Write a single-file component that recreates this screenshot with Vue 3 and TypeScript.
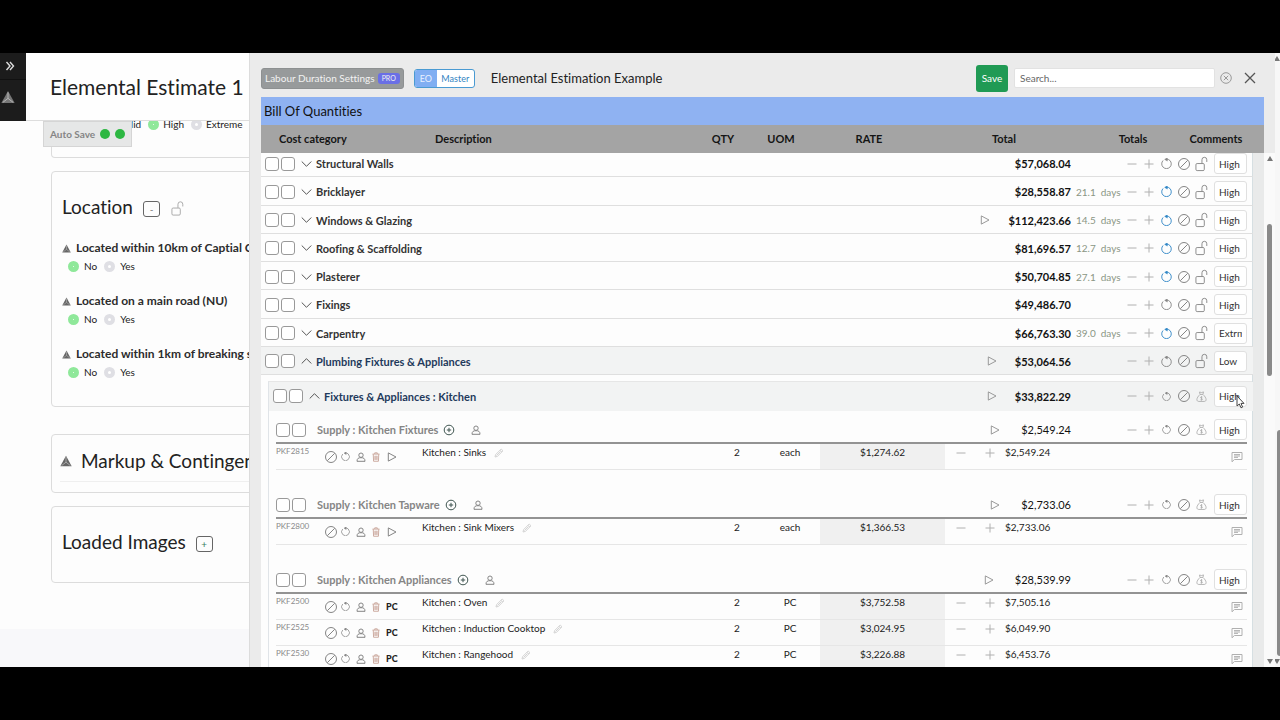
<script setup lang="ts">
import { reactive, ref } from 'vue'

interface Category {
  name: string
  total: string
  days?: string
  level: string
  play?: boolean
  open?: boolean
}
interface Item {
  code: string
  name: string
  qty: number
  uom: string
  rate: string
  total: string
}
interface Section {
  name: string
  total: string
  level: string
  items: Item[]
}

const levels = ['Low', 'Mid', 'High', 'Extrm']
const search = ref('')

const questions = reactive([
  { text: 'Located within 10km of Captial City', answer: 'No' },
  { text: 'Located on a main road (NU)', answer: 'No' },
  { text: 'Located within 1km of breaking surf', answer: 'No' },
])
const finish = ref('High')

const categories = reactive<Category[]>([
  { name: 'Structural Walls', total: '$57,068.04', level: 'High' },
  { name: 'Bricklayer', total: '$28,558.87', days: '21.1', level: 'High' },
  { name: 'Windows & Glazing', total: '$112,423.66', days: '14.5', level: 'High', play: true },
  { name: 'Roofing & Scaffolding', total: '$81,696.57', days: '12.7', level: 'High' },
  { name: 'Plasterer', total: '$50,704.85', days: '27.1', level: 'High' },
  { name: 'Fixings', total: '$49,486.70', level: 'High' },
  { name: 'Carpentry', total: '$66,763.30', days: '39.0', level: 'Extrm' },
  { name: 'Plumbing Fixtures & Appliances', total: '$53,064.56', level: 'Low', play: true, open: true },
])

const group = reactive({ name: 'Fixtures & Appliances : Kitchen', total: '$33,822.29', level: 'High' })

const sections = reactive<Section[]>([
  {
    name: 'Supply : Kitchen Fixtures', total: '$2,549.24', level: 'High',
    items: [{ code: 'PKF2815', name: 'Kitchen : Sinks', qty: 2, uom: 'each', rate: '$1,274.62', total: '$2,549.24' }],
  },
  {
    name: 'Supply : Kitchen Tapware', total: '$2,733.06', level: 'High',
    items: [{ code: 'PKF2800', name: 'Kitchen : Sink Mixers', qty: 2, uom: 'each', rate: '$1,366.53', total: '$2,733.06' }],
  },
  {
    name: 'Supply : Kitchen Appliances', total: '$28,539.99', level: 'High',
    items: [
      { code: 'PKF2500', name: 'Kitchen : Oven', qty: 2, uom: 'PC', rate: '$3,752.58', total: '$7,505.16' },
      { code: 'PKF2525', name: 'Kitchen : Induction Cooktop', qty: 2, uom: 'PC', rate: '$3,024.95', total: '$6,049.90' },
      { code: 'PKF2530', name: 'Kitchen : Rangehood', qty: 2, uom: 'PC', rate: '$3,226.88', total: '$6,453.76' },
    ],
  },
])
</script>

<template>
  <div class="stage">
    <svg class="sprite" aria-hidden="true">
      <symbol id="i-minus" viewBox="0 0 10 10"><path d="M.5 5h9" /></symbol>
      <symbol id="i-plus" viewBox="0 0 10 10"><path d="M.5 5h9M5 .5v9" /></symbol>
      <symbol id="i-rotate" viewBox="0 0 12 12">
        <path d="M2.300 2.700A5.200 5.200 0 1 0 9.700 2.700 5.200 5.200 0 0 0 6 1.200" /><path d="M6.900-.4 4 1.500l2.900 1.900z" fill="currentColor" stroke-width=".5" />
      </symbol>
      <symbol id="i-ban" viewBox="0 0 12 12"><circle cx="6" cy="6" r="5.500" /><path d="M2.300 9.700l7.400-7.400" /></symbol>
      <symbol id="i-lock" viewBox="0 0 14 16">
        <rect x="1" y="7.5" width="9" height="7.6" rx="1.3" /><path d="M7.5 7.3V3.4a2.6 2.6 0 0 1 5.2 0v2.4" />
      </symbol>
      <symbol id="i-bag" viewBox="0 0 12 12">
        <path d="M4.4 3.8h3.2M4.4 3.6 3.8 1.1 6 1.7 8.2 1l-.6 2.6M4.4 3.8C2.4 5.6 1 7.6 1 9.4c0 1.3.8 2 2 2h6c1.200 0 2-.7 2-2 0-1.800-1.400-3.800-3.400-5.600" />
        <path d="M7 6.600C6 6 5 6.400 5 7.200c0 1 2 .8 2 1.800 0 .9-1.200 1.200-2.100.6M6 5.800v4.400" />
      </symbol>
      <symbol id="i-play" viewBox="0 0 10 10"><path d="M1.300.9 9 5 1.300 9.100z" stroke-linejoin="round" /></symbol>
      <symbol id="i-down" viewBox="0 0 12 8"><path d="M.8 1.300 6 6.500l5.200-5.200" /></symbol>
      <symbol id="i-up" viewBox="0 0 12 8"><path d="M.8 6.700 6 1.500l5.200 5.200" /></symbol>
      <symbol id="i-add" viewBox="0 0 12 12"><circle cx="6" cy="6" r="4.800" /><path d="M3.800 6h4.400M6 3.800v4.400" /></symbol>
      <symbol id="i-person" viewBox="0 0 10 10"><circle cx="5" cy="3.200" r="2.200" /><path d="M1 9.300c0-3 1.500-3.600 4-3.600s4 .6 4 3.600z" /></symbol>
      <symbol id="i-trash" viewBox="0 0 10 12">
        <path d="M.8 2.500h8.400M3.500 2.300V1h3v1.300M1.700 2.700l.4 8.400h5.800l.4-8.400M3.700 4.500v5M5 4.500v5M6.300 4.500v5" />
      </symbol>
      <symbol id="i-pencil" viewBox="0 0 10 10"><path d="M1 9l.6-2.400L7.200 1l1.800 1.800-5.600 5.600zM6 2.200 7.800 4M2.500 7.500l4-4" /></symbol>
      <symbol id="i-comment" viewBox="0 0 12 12"><path d="M1 10.800V1.500h10v7H3.400zM3 3.600h6M3 5h6M3 6.400h4" /></symbol>
      <symbol id="i-peak" viewBox="0 0 12 12">
        <path d="M6 .8 11.700 11.200H.3z" fill="currentColor" stroke="none" /><path d="M6 2v5.200L1.600 10.600M6 7.200l4.400 3.400" stroke="#e4e4e4" stroke-width=".5" />
      </symbol>
      <symbol id="i-cross" viewBox="0 0 12 12"><path d="M1 1l10 10M11 1 1 11" stroke-width="1.300" /></symbol>
      <symbol id="i-clear" viewBox="0 0 12 12"><circle cx="6" cy="6" r="5.300" /><path d="M3.800 3.800l4.400 4.400M8.200 3.800 3.800 8.200" /></symbol>
      <symbol id="i-angles" viewBox="0 0 10 10"><path d="M1.500 1l3.500 4-3.500 4M5 1l3.500 4L5 9" stroke-width="1.400" /></symbol>
    </svg>

    <div class="screen">
      <div class="page">
        <header class="page-head">
          <nav class="rail">
            <button type="button" aria-label="Expand menu"><svg class="s10"><use href="#i-angles" /></svg></button>
            <a href="#" aria-label="Home"><svg class="s14"><use href="#i-peak" /></svg></a>
          </nav>
          <h1>Elemental Estimate 1</h1>
        </header>
        <div class="page-body">
          <div class="autosave">Auto Save <i></i><i></i></div>
          <section class="card finish">
            <label><input v-model="finish" type="radio" name="finish" value="Mid" /> Mid</label>
            <label><input v-model="finish" type="radio" name="finish" value="High" /> High</label>
            <label><input v-model="finish" type="radio" name="finish" value="Extreme" /> Extreme</label>
          </section>
          <section class="card location">
            <h2>Location
              <button type="button" class="toggle" aria-label="Collapse">-</button>
              <svg class="lock-lg"><use href="#i-lock" /></svg>
            </h2>
            <fieldset v-for="(q, i) in questions" :key="i">
              <legend><svg class="s9"><use href="#i-peak" /></svg>{{ q.text }}</legend>
              <label><input v-model="q.answer" type="radio" :name="'q' + i" value="No" /> No</label>
              <label><input v-model="q.answer" type="radio" :name="'q' + i" value="Yes" /> Yes</label>
            </fieldset>
          </section>
          <section class="card markup">
            <h2><svg class="s12"><use href="#i-peak" /></svg>Markup &amp; Contingency</h2>
          </section>
          <section class="card images">
            <h2>Loaded Images <button type="button" class="toggle green" aria-label="Expand">+</button></h2>
          </section>
        </div>
        <footer class="page-foot"></footer>
      </div>

      <main class="panel">
        <div class="toolbar">
          <button type="button" class="labour">Labour Duration Settings <span>PRO</span></button>
          <div class="switch"><button type="button" class="on">EO</button><button type="button">Master</button></div>
          <h2>Elemental Estimation Example</h2>
          <button type="button" class="save">Save</button>
          <input v-model="search" type="text" class="search" placeholder="Search..." aria-label="Search" />
          <button type="button" class="bare clear" aria-label="Clear search"><svg class="s12"><use href="#i-clear" /></svg></button>
          <button type="button" class="bare close" aria-label="Close"><svg class="s12"><use href="#i-cross" /></svg></button>
        </div>
        <div class="sheet">
          <table>
            <caption>Bill Of Quantities</caption>
            <thead>
              <tr>
                <th>Cost category</th><th>Description</th><th>QTY</th><th>UOM</th><th>RATE</th><th>Total</th><th>Totals</th><th>Comments</th>
              </tr>
            </thead>
            <tbody class="categories">
              <tr v-for="c in categories" :key="c.name" class="line" :class="{ open: c.open }">
                <th scope="row">
                  <input type="checkbox" :aria-label="'Select ' + c.name" /><input type="checkbox" :aria-label="'Include ' + c.name" />
                  <button type="button" class="bare name"><svg class="chev"><use :href="c.open ? '#i-up' : '#i-down'" /></svg>{{ c.name }}</button>
                </th>
                <td class="sum"><svg v-if="c.play" class="s10"><use href="#i-play" /></svg>{{ c.total }}</td>
                <td class="days"><template v-if="c.days"><span>{{ c.days }}</span> <span>days</span></template></td>
                <td class="controls">
                  <div class="tools">
                    <button type="button" class="bare pale" aria-label="Decrease"><svg class="s10"><use href="#i-minus" /></svg></button>
                    <button type="button" class="bare pale" aria-label="Increase"><svg class="s10"><use href="#i-plus" /></svg></button>
                    <button type="button" class="bare" :class="{ blue: c.days }" aria-label="Reset"><svg class="s11"><use href="#i-rotate" /></svg></button>
                    <button type="button" class="bare" aria-label="Exclude"><svg class="s12"><use href="#i-ban" /></svg></button>
                    <button type="button" class="bare" aria-label="Unlock"><svg class="lock"><use href="#i-lock" /></svg></button>
                  </div>
                  <select v-model="c.level" :aria-label="c.name + ' level'"><option v-for="l in levels" :key="l">{{ l }}</option></select>
                </td>
              </tr>
            </tbody>
            <tbody class="group">
              <tr class="line open">
                <th scope="row">
                  <input type="checkbox" aria-label="Select group" /><input type="checkbox" aria-label="Include group" />
                  <button type="button" class="bare name"><svg class="chev"><use href="#i-up" /></svg>{{ group.name }}</button>
                </th>
                <td class="sum"><svg class="s10"><use href="#i-play" /></svg>{{ group.total }}</td>
                <td></td>
                <td class="controls">
                  <div class="tools">
                    <button type="button" class="bare pale" aria-label="Decrease"><svg class="s10"><use href="#i-minus" /></svg></button>
                    <button type="button" class="bare pale" aria-label="Increase"><svg class="s10"><use href="#i-plus" /></svg></button>
                    <button type="button" class="bare" aria-label="Reset"><svg class="s9"><use href="#i-rotate" /></svg></button>
                    <button type="button" class="bare" aria-label="Exclude"><svg class="s12"><use href="#i-ban" /></svg></button>
                    <button type="button" class="bare pale" aria-label="Budget"><svg class="s11"><use href="#i-bag" /></svg></button>
                  </div>
                  <select v-model="group.level" aria-label="Group level"><option v-for="l in levels" :key="l">{{ l }}</option></select>
                  <svg class="pointer" viewBox="0 0 9 14"><path d="M1 1v10l2.300-2 1.700 3.800 1.600-.7L5 8.400h3z" /></svg>
                </td>
              </tr>
            </tbody>
            <tbody v-for="s in sections" :key="s.name" class="section">
              <tr class="line">
                <th scope="row">
                  <input type="checkbox" :aria-label="'Select ' + s.name" /><input type="checkbox" :aria-label="'Include ' + s.name" />
                  <span class="title">{{ s.name }}</span>
                  <button type="button" class="bare dark" aria-label="Add item"><svg class="s12"><use href="#i-add" /></svg></button>
                  <button type="button" class="bare" aria-label="Assign"><svg class="s10"><use href="#i-person" /></svg></button>
                </th>
                <td class="sum"><svg class="s10"><use href="#i-play" /></svg>{{ s.total }}</td>
                <td></td>
                <td class="controls">
                  <div class="tools">
                    <button type="button" class="bare pale" aria-label="Decrease"><svg class="s10"><use href="#i-minus" /></svg></button>
                    <button type="button" class="bare pale" aria-label="Increase"><svg class="s10"><use href="#i-plus" /></svg></button>
                    <button type="button" class="bare" aria-label="Reset"><svg class="s9"><use href="#i-rotate" /></svg></button>
                    <button type="button" class="bare" aria-label="Exclude"><svg class="s12"><use href="#i-ban" /></svg></button>
                    <button type="button" class="bare pale" aria-label="Budget"><svg class="s11"><use href="#i-bag" /></svg></button>
                  </div>
                  <select v-model="s.level" :aria-label="s.name + ' level'"><option v-for="l in levels" :key="l">{{ l }}</option></select>
                </td>
              </tr>
              <tr v-for="it in s.items" :key="it.code" class="item">
                <td class="code">{{ it.code }}</td>
                <td class="actions">
                  <button type="button" class="bare" aria-label="Exclude"><svg class="s12"><use href="#i-ban" /></svg></button>
                  <button type="button" class="bare" aria-label="Reset"><svg class="s9"><use href="#i-rotate" /></svg></button>
                  <button type="button" class="bare" aria-label="Assign"><svg class="s10"><use href="#i-person" /></svg></button>
                  <button type="button" class="bare red" aria-label="Delete"><svg class="s10"><use href="#i-trash" /></svg></button>
                  <b v-if="it.uom === 'PC'">PC</b>
                  <button v-else type="button" class="bare run" aria-label="Run"><svg class="s10"><use href="#i-play" /></svg></button>
                </td>
                <td class="desc">{{ it.name }}<svg class="s10"><use href="#i-pencil" /></svg></td>
                <td class="mid">{{ it.qty }}</td>
                <td class="mid">{{ it.uom }}</td>
                <td class="mid rate">{{ it.rate }}</td>
                <td class="step">
                  <button type="button" class="bare pale" aria-label="Decrease"><svg class="s10"><use href="#i-minus" /></svg></button>
                  <button type="button" class="bare pale" aria-label="Increase"><svg class="s10"><use href="#i-plus" /></svg></button>
                </td>
                <td>{{ it.total }}</td>
                <td class="note"><button type="button" class="bare pale" aria-label="Comment"><svg class="s12"><use href="#i-comment" /></svg></button></td>
              </tr>
            </tbody>
          </table>
          <div class="gutter"><i class="arrow up"></i><i class="thumb"></i><i class="arrow down"></i></div>
        </div>
      </main>
      <div class="page-scroll"><i class="arrow up"></i><i class="thumb"></i><i class="arrow down"></i></div>
    </div>
  </div>
</template>

<style>
html, body { margin: 0; background: #000; }
</style>

<style scoped>
.stage { box-sizing: border-box; height: 100vh; padding: 53px 0; background: #000; font-family: Lato, "Liberation Sans", sans-serif; font-size: 11px; font-variant-ligatures: none; color: #222; overflow: hidden; }
.stage *, .stage *::before { box-sizing: border-box; }
.sprite { display: none; }
svg { flex: none; fill: none; stroke: currentColor; stroke-width: 1; overflow: visible; }
.s9 { width: 9px; height: 9px; }
.s10 { width: 10px; height: 10px; }
.s11 { width: 11px; height: 11px; }
.s12 { width: 12px; height: 12px; }
.s14 { width: 14px; height: 14px; }
button, input, select { font: inherit; font-variant-ligatures: none; color: inherit; margin: 0; }
button { border: 0; padding: 0; background: none; }
h1, h2 { margin: 0; font-weight: 400; white-space: nowrap; }
.bare { display: inline-flex; align-items: center; justify-content: center; flex: none; color: #858585; }
.bare.pale { color: #b0b0b0; }
.bare.blue { color: #2f86c6; }
.bare.dark { color: #3f5550; }
.bare.red { color: #c39a8e; }

.screen { display: grid; grid-template-columns: 249px minmax(0, 1fr) 5px; height: 100%; overflow: hidden; background: #fdfdfd; }

.page { display: flex; flex-direction: column; overflow: hidden; background: #fdfdfd; }
.page-head { display: flex; flex: none; height: 68px; border-bottom: 1px solid #ddd; background: #fefefe; }
.rail { display: flex; flex: none; flex-direction: column; width: 26px; height: 68px; background: #1c1c1c; color: #ddd; }
.rail button { display: flex; align-items: center; justify-content: center; width: 20px; height: 26px; }
.rail a { display: flex; align-items: center; height: 34px; padding-left: 1px; color: #777; border-top: 1px solid #111; }
h1 { padding-left: 24px; font-size: 21px; line-height: 68px; }
.page-body { position: relative; flex: 1; min-height: 0; padding-left: 51px; overflow: hidden; }
.page-foot { flex: none; height: 38px; background: #f8f8fa; }
.card { width: 400px; border: 1px solid #dcdcdc; border-radius: 4px; }
.card h2 { display: flex; align-items: center; font-size: 19px; line-height: 28px; }
.finish { display: flex; height: 37px; margin-bottom: 13px; padding-left: 57px; border-top: 0; border-radius: 0 0 4px 4px; }
label { display: inline-flex; align-items: center; gap: 4px; font-size: 10px; line-height: 14px; }
.finish label { height: 6px; margin-right: 7px; }
input[type='radio'] { appearance: none; width: 11px; height: 11px; border: 4px solid #dfdfe4; border-radius: 50%; background: #fff; }
input[type='radio']:checked { border: 5px solid #8fe89a; }
.autosave { position: absolute; top: 0; left: 43px; display: flex; align-items: center; gap: 5px; height: 26px; padding: 0 6px; border: 1px solid #d5d5d5; background: #e6e7e7; color: #858585; font-size: 10px; font-weight: 700; white-space: nowrap; }
.autosave i { width: 10px; height: 10px; border-radius: 50%; background: #2db742; }
.location { height: 236px; padding: 21px 10px 0; }
.toggle { width: 17px; height: 16px; margin: 3px 0 0 10px; border: 1px solid #666; border-radius: 3px; font-size: 10px; line-height: 12px; color: #777; }
.toggle.green { color: #3b8060; }
.lock-lg { width: 13px; height: 15px; margin: 3px 0 0 11px; color: #a5a5a5; }
fieldset { margin: 0; padding: 0; border: 0; height: 53px; white-space: nowrap; }
.location h2 { margin-bottom: 18px; }
legend { display: flex; align-items: center; gap: 5px; padding: 0; font-size: 12px; line-height: 18px; font-weight: 700; color: #2c2c2c; }
legend svg { color: #666; }
fieldset label { height: 18px; margin-left: 6px; gap: 5px; }
fieldset label + label { margin-left: 7px; }
.markup { height: 59px; margin-top: 27px; padding: 12px 8px 0; }
.markup h2 { padding-bottom: 6px; border-bottom: 1px solid #efefef; }
.markup svg { margin-right: 9px; color: #666; }
.images { height: 77px; margin-top: 13px; padding: 21px 10px 0; }

.panel { display: flex; flex-direction: column; min-width: 0; overflow: hidden; background: #ebebeb; border-left: 1px solid #dcdcdc; padding-left: 11px; }
.toolbar { display: flex; align-items: center; flex: none; height: 44px; padding: 6px 19px 0 0; }
.labour { display: flex; align-items: center; gap: 3px; height: 21px; padding: 0 3px; border: 1px solid #8d9091; border-radius: 3px; background: #979a9b; color: #f2f2f2; font-size: 10px; }
.labour span { padding: 0 4px; border-radius: 3px; background: #6a6fe6; font-size: 7px; line-height: 11px; }
.switch { display: flex; margin-left: 10px; border: 1px solid #4a9ad2; border-radius: 3px; overflow: hidden; background: #fff; font-size: 9px; line-height: 17px; color: #3384c2; }
.switch button { width: 37px; }
.switch .on { width: 22px; background: #80aef2; color: #e8f0ff; }
.toolbar h2 { flex: 1; margin-left: 16px; font-size: 13px; color: #222; }
.save { width: 32px; height: 27px; border-radius: 3px; background: #209a54; color: #fff; font-size: 10px; }
.search { width: 201px; height: 20px; margin-left: 6px; padding: 0 5px; border: 1px solid #e2e2e2; border-radius: 2px; background: #fff; font-size: 10px; }
.search::placeholder { color: #666; opacity: 1; }
.clear { width: 12px; margin-left: 5px; }
.clear.bare { color: #999; }
.close { width: 12px; margin-left: 12px; }
.close.bare { color: #555; }

.sheet { display: flex; flex: 1; min-height: 0; }
table { display: flex; flex: 1; flex-direction: column; min-width: 0; overflow: hidden; background: linear-gradient(to left, #e9eaea 11px, #d6dfe2 11px, #d6dfe2 12px, #fdfdfd 12px); }
caption { display: block; flex: none; padding-left: 3px; background: #8fb2f2; font-size: 13px; line-height: 28px; text-align: left; color: #111; }
thead { display: block; flex: none; position: relative; z-index: 1; background: #a4a4a4; }
thead tr { display: grid; grid-template-columns: 156px minmax(0, 1fr) 22px 94px 82px 188px 70px 96px; padding-left: 18px; line-height: 28px; }
th, td { padding: 0; font-weight: 400; text-align: left; white-space: nowrap; }
thead th { font-weight: 700; color: #151515; }
thead th:nth-child(n + 3) { display: flex; justify-content: center; }
tbody { flex: none; }
.categories { display: grid; grid-auto-rows: 1fr; height: 226px; margin: -4px 11px 0 0; }
.line { display: grid; grid-template-columns: minmax(0, 1fr) 100px 52px 130px; align-items: center; }
.categories .line { padding: 2px 0 0 4px; border-bottom: 1px solid #dfdfdf; }
.line th { display: flex; align-items: center; }
input[type='checkbox'] { appearance: none; flex: none; width: 14px; height: 14px; margin-right: 2px; border: 1px solid #999; border-radius: 3px; background: #fff; }
.name { gap: 4px; margin-left: 4px; font-weight: 700; }
.name.bare { color: #333; }
.open .name.bare { color: #1f3a5c; }
.chev { width: 11px; height: 8px; color: #444; }
.line.open { background: #f2f3f3; }
.sum { display: flex; align-items: center; justify-content: flex-end; gap: 18px; font-size: 11px; font-weight: 700; color: #111; }
.sum svg { color: #999; }
.days { display: flex; gap: 5px; padding-left: 5px; font-size: 10px; color: #8a9684; }
.controls { position: relative; display: flex; align-items: center; }
.tools { display: flex; justify-content: space-between; width: 87px; }
.tools .bare { width: 17px; height: 20px; }
.lock { width: 13px; height: 16px; }
select { appearance: none; width: 33px; height: 21px; margin-left: 4px; padding: 0 4px; border: 1px solid #e0e0e0; border-radius: 3px; background: #fff; color: #333; overflow: hidden; font-size: 10px; }
.group { display: block; margin: 6px 12px 0 7px; border-left: 1px solid #e0e4e8; border-top: 1px solid #e6e6e6; }
.group .line { height: 29px; padding: 0 0 1px 4px; margin-right: -1px; }
.pointer { position: absolute; top: 9px; left: 113px; width: 9px; height: 14px; fill: #fff; stroke: #444; }
.section { display: block; margin-left: 7px; margin-right: 17px; border-left: 1px solid #e0e4e8; padding: 6px 0 16px 7px; }
.section .line { height: 27px; grid-template-columns: minmax(0, 1fr) 100px 52px 124px; border-bottom: 2px solid #939393; }
.section .sum { font-weight: 400; gap: 21px; }
.title { margin: 0 5px 0 9px; font-weight: 700; color: #858585; }
.dark + .bare { margin-left: 16px; }
.item { display: grid; grid-template-columns: 47px 99px minmax(0, 1fr) 46px 60px 125px 60px 200px 42px; height: 26px; line-height: 17px; border-bottom: 1px solid #e6e6e6; color: #222; font-size: 10px; }
.code { font-size: 8px; line-height: 14px; color: #8a8a8a; }
.actions { display: flex; align-items: center; }
.actions .bare { width: 15px; height: 24px; }
.actions .run { width: 18px; }
.actions b { margin-left: 3px; font-size: 9px; font-weight: 900; }
.desc svg { margin-left: 8px; vertical-align: middle; color: #d4d4d4; }
.mid { text-align: center; }
.rate { background: #f0f0f0; }
.step { display: flex; justify-content: space-between; padding: 0 7px; }
.step .bare { width: 17px; height: 17px; }
.note { display: flex; align-items: center; justify-content: flex-end; padding-right: 4px; }

.gutter { position: relative; display: flex; flex: none; flex-direction: column; align-items: center; width: 11px; margin-top: 56px; background: #fafafa; }
.gutter .thumb { width: 5px; height: 152px; margin-top: 63px; border-radius: 3px; background: #8a8a8a; }
.arrow { width: 0; height: 0; border: 3px solid transparent; }
.arrow.up { border-top: 0; border-bottom: 5px solid #777; margin-top: 3px; }
.arrow.down { border-bottom: 0; border-top: 5px solid #777; margin-top: auto; margin-bottom: 3px; }
.page-scroll { display: flex; flex-direction: column; align-items: flex-end; overflow: hidden; background: #f7f7f7; }
.page-scroll .thumb { width: 3px; height: 226px; margin-top: 369px; border-radius: 3px 0 0 3px; background: #8a8a8a; }
</style>
